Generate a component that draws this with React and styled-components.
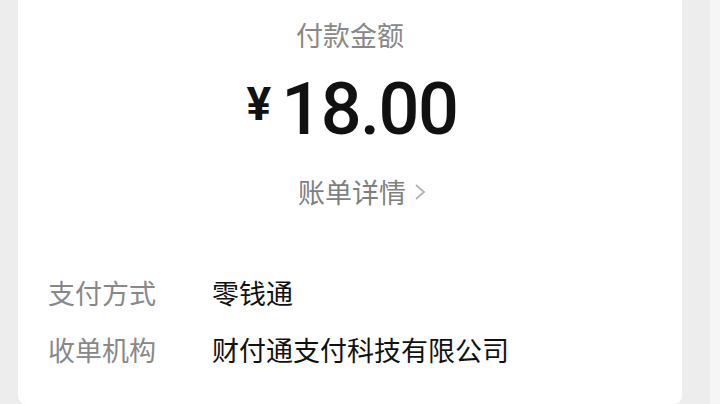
import React from "react";
import styled, { createGlobalStyle } from "styled-components";

const GlobalStyle = createGlobalStyle`
  html, body {
    margin: 0;
    padding: 0;
    background: #ededed;
    font-family: "Noto Sans CJK SC", "Noto Sans", sans-serif;
  }
`;

const Page = styled.div`
  display: flex;
  width: 720px;
  height: 404px;
  overflow: hidden;
  background: #ededed;
`;

const Gutter = styled.div`
  flex: 0 0 ${props => props.w}px;
  background: ${props => props.light ? "#f6f6f6" : "#ededed"};
`;

const Card = styled.div`
  flex: 0 0 664px;
  height: 404px;
  background: #fff;
  border-radius: 0 0 8px 8px;
  padding: 15px 30px 0;
  box-sizing: border-box;
  display: flex;
  flex-direction: column;
`;

const Title = styled.div`
  text-align: center;
  font-size: 27px;
  line-height: 40px;
  color: #888;
`;

const Amount = styled.div`
  margin-top: 14px;
  height: 80px;
  display: flex;
  align-items: center;
  justify-content: center;
  color: #111;
  font-family: Roboto, "Liberation Sans", sans-serif;
`;

const Currency = styled.span`
  font-size: 46px;
  font-weight: 700;
  margin-right: 10px;
  margin-bottom: 10px;
  margin-left: 4px;
`;

const Digits = styled.span`
  font-size: 72px;
  font-weight: 500;
  letter-spacing: -1.5px;
`;

const DetailLink = styled.div`
  margin-top: 23px;
  display: flex;
  align-items: center;
  justify-content: center;
  gap: 8px;
  font-size: 27px;
  line-height: 40px;
  color: #7f7f7f;
  padding-left: 24px;
`;

const Rows = styled.div`
  margin-top: 61px;
  display: flex;
  flex-direction: column;
  gap: 17px;
`;

const Row = styled.div`
  display: flex;
  font-size: 27px;
  line-height: 40px;
`;

const Label = styled.div`
  flex: 0 0 164px;
  color: #888;
`;

const Value = styled.div`
  color: #111;
`;

const Chevron = () => (
  <svg width="12" height="16" viewBox="0 0 12 16">
    <polyline points="2,1 10,8 2,15" fill="none" stroke="#b2b2b2" strokeWidth="1.8" />
  </svg>
);

export default function App() {
  return (
    <>
      <GlobalStyle />
      <Page>
        <Gutter w={18} />
        <Card>
          <Title>付款金额</Title>
          <Amount>
            <Currency>¥</Currency>
            <Digits>18.00</Digits>
          </Amount>
          <DetailLink>
            账单详情
            <Chevron />
          </DetailLink>
          <Rows>
            <Row>
              <Label>支付方式</Label>
              <Value>零钱通</Value>
            </Row>
            <Row>
              <Label>收单机构</Label>
              <Value>财付通支付科技有限公司</Value>
            </Row>
          </Rows>
        </Card>
        <Gutter w={28} />
        <Gutter w={10} light />
      </Page>
    </>
  );
}
